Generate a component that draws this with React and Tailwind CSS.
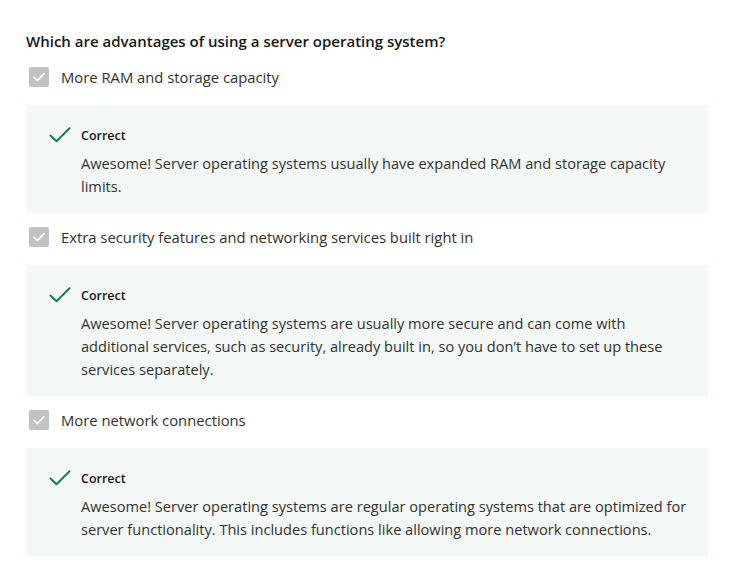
import React from "react";

const items = [
  {
    label: "More RAM and storage capacity",
    body: "Awesome! Server operating systems usually have expanded RAM and storage capacity limits.",
  },
  {
    label: "Extra security features and networking services built right in",
    body: "Awesome! Server operating systems are usually more secure and can come with additional services, such as security, already built in, so you don’t have to set up these services separately.",
  },
  {
    label: "More network connections",
    body: "Awesome! Server operating systems are regular operating systems that are optimized for server functionality. This includes functions like allowing more network connections.",
  },
];

function CheckBox() {
  return (
    <div className="ml-[3px] flex h-[20px] w-[20px] shrink-0 items-center justify-center rounded-[2px] bg-[#c2c2c2]">
      <svg width="14" height="14" viewBox="0 0 14 14" fill="none">
        <path d="M2 7.3 L5.4 10.6 L12 3.6" stroke="#ffffff" strokeWidth="1.6" strokeLinecap="round" strokeLinejoin="round" />
      </svg>
    </div>
  );
}

function GreenCheck() {
  return (
    <svg width="22" height="16" viewBox="0 0 22 16" fill="none" className="shrink-0">
      <path d="M1.5 8.5 L7.5 14.2 L20.5 1.2" stroke="#1f7a4d" strokeWidth="2" strokeLinecap="round" strokeLinejoin="round" />
    </svg>
  );
}

export default function App() {
  return (
    <div
      className="min-h-[566px] w-[754px] bg-white pl-[26px] pt-[29px] text-[#323130]"
      style={{ fontFamily: '"Open Sans", "Noto Sans", sans-serif' }}
    >
      <h1 className="text-[15px] font-semibold leading-[24px] text-[#171717]">
        Which are advantages of using a server operating system?
      </h1>
      <div className="flex flex-col">
        {items.map((it, i) => (
          <div key={i} className="mt-[14px]">
            <div className="flex h-[20px] items-center gap-[12px]">
              <CheckBox />
              <span className="text-[14.8px] leading-[20px]">{it.label}</span>
            </div>
            <div className="mt-[18px] w-[682px] bg-[#f3f8f6] pb-[15px] pl-[23px] pr-[16px] pt-[21px]">
              <div className="flex items-start gap-[10px]">
                <div className="pt-[1px]">
                  <GreenCheck />
                </div>
                <div className="flex flex-col">
                  <span className="text-[12.5px] font-semibold leading-[20px] text-[#171717]">Correct</span>
                  <p className="mt-[6px] text-[14.6px] leading-[23px]">{it.body}</p>
                </div>
              </div>
            </div>
          </div>
        ))}
      </div>
    </div>
  );
}
